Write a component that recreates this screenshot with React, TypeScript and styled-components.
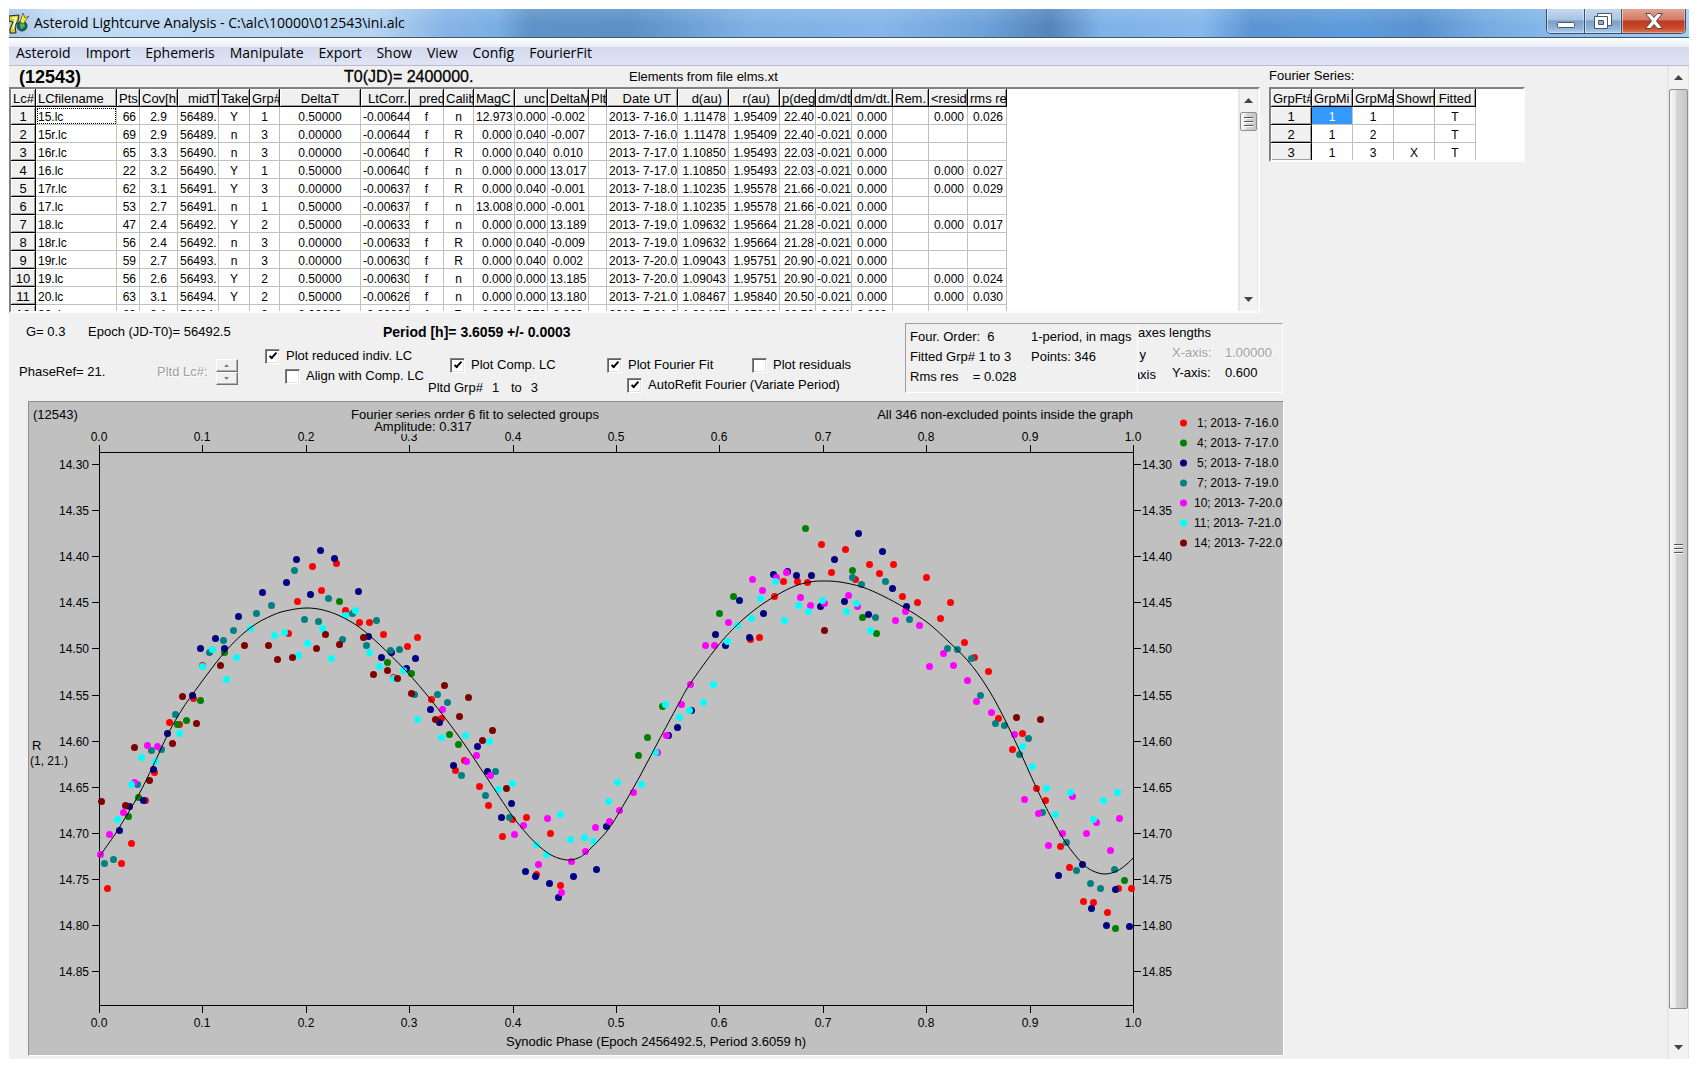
import React from "react";
import styled, { createGlobalStyle, css } from "styled-components";

const GlobalStyle = createGlobalStyle`
  *, *::before, *::after { box-sizing: border-box; }
  body { margin: 0; background: #ffffff; }
  button, input { font: inherit; color: inherit; margin: 0; }
`;

const sans = `"Liberation Sans", Arial, sans-serif`;
const chrome = `"Open Sans", "Noto Sans", sans-serif`;

/* ---------- window frame ---------- */

const Page = styled.div`
  min-height: 100vh;
  padding: 9px;
  display: flex;
  flex-direction: column;
`;

const Window = styled.div`
  flex: 1;
  display: flex;
  flex-direction: column;
  background: #f0f0f0;
  font-family: ${sans};
  font-size: 13px;
  line-height: 18px;
  color: #000;
`;

const TitleBar = styled.header`
  height: 29px;
  display: flex;
  align-items: center;
  justify-content: space-between;
  border-bottom: 1px solid #3c5878;
  background:
    linear-gradient(180deg, rgba(255, 255, 255, 0.12), rgba(255, 255, 255, 0) 60%),
    linear-gradient(90deg, #a9c8ea 0%, #c3dcf3 3%, #b4d3f0 22%, #86b4e6 26%, #7aafe4 29%, #5f92c8 31%, #5c90c7 37%,
      #7fb1e5 44%, #86b6e9 52%, #6ea2da 58%, #5384bb 62%, #7fb2e8 65%, #86b8ec 71%, #5b95d3 74%,
      #5f9cdc 80%, #5993d0 84%, #76ace2 88%, #8cbcea 93%, #a8cff2 100%);
`;

const TitleGroup = styled.div`
  display: flex;
  align-items: center;
  gap: 4px;
`;

const TitleText = styled.h1`
  margin: 0;
  font: 400 14px/26px ${chrome};
`;

const WindowButtons = styled.div`
  align-self: flex-start;
  display: flex;
  margin-right: 3px;
  height: 25px;
  border: 1px solid #3a4f6b;
  border-top: 0;
  border-radius: 0 0 5px 5px;
  overflow: hidden;
`;

const WindowButton = styled.button<{ $close?: boolean }>`
  width: ${(p) => (p.$close ? 64 : 37)}px;
  padding: 0;
  border: 0;
  display: flex;
  align-items: center;
  justify-content: center;
  background: ${(p) =>
    p.$close
      ? "linear-gradient(180deg, #e0a493 0%, #d27a66 45%, #bd3a22 50%, #c94a2c 80%, #dc7a55 100%)"
      : "linear-gradient(180deg, #c6d9ee 0%, #a9c4e2 45%, #7c9fc6 50%, #8fb2d8 80%, #b3d2ee 100%)"};
  box-shadow: inset 1px 0 rgba(255, 255, 255, 0.5), inset -1px -1px rgba(255, 255, 255, 0.3);
  & + & { border-left: 1px solid #3a4f6b; }
`;

const MenuBar = styled.nav`
  height: 28px;
  display: flex;
  align-items: center;
  padding: 2px 0 0 7px;
  gap: 15px;
  border-bottom: 1px solid #b6bbd3;
  background: linear-gradient(180deg, #ffffff 0%, #e9edf7 32%, #d4daee 34%, #dfe4f5 100%);
`;

const MenuItem = styled.button`
  border: 0;
  padding: 0;
  background: none;
  font: 400 14px/22px ${chrome};
`;

const Workspace = styled.div`
  flex: 1;
  display: flex;
`;

const Content = styled.main`
  flex: 1;
  min-width: 0;
`;

/* ---------- scroll bars ---------- */

const ScrollTrack = styled.div<{ $wide?: boolean }>`
  width: ${(p) => (p.$wide ? 22 : 20)}px;
  flex: none;
  display: flex;
  flex-direction: column;
  background: #f2f2f2;
  border: solid #e6e6e6;
  border-width: 0 1px 0 2px;
`;

const ArrowButton = styled.button<{ $bottom?: boolean }>`
  height: 23px;
  flex: none;
  padding: 0;
  border: 0;
  background: none;
  display: flex;
  align-items: center;
  justify-content: center;
  margin-top: ${(p) => (p.$bottom ? "auto" : "0")};
`;

const Thumb = styled.div<{ $fill?: boolean }>`
  ${(p) => (p.$fill ? css`flex: 1; margin-bottom: 27px;` : css`height: 19px;`)}
  border: 1px solid #8f8f8f;
  border-radius: 2px;
  background: linear-gradient(90deg, #f8f8f8 0%, #e8e8e8 32%, #d6d6d8 38%, #c6c6c8 100%);
  display: flex;
  flex-direction: column;
  align-items: center;
  justify-content: center;
  gap: 2px;
`;

const Grip = styled.span`
  width: 9px;
  height: 2px;
  background: linear-gradient(180deg, #555 50%, #fff 50%);
`;

function VScroll({ label, fill }: { label: string; fill?: boolean }) {
  return (
    <ScrollTrack $wide={fill}>
      <ArrowButton type="button" aria-label={`Scroll ${label} up`}>
        <svg width="9" height="5"><path d="M0 5 L4.5 0 L9 5Z" fill="#444" /></svg>
      </ArrowButton>
      <Thumb $fill={fill}><Grip /><Grip /><Grip /></Thumb>
      <ArrowButton type="button" $bottom={!fill} aria-label={`Scroll ${label} down`}>
        <svg width="9" height="5"><path d="M0 0 L4.5 5 L9 0Z" fill="#444" /></svg>
      </ArrowButton>
    </ScrollTrack>
  );
}

/* ---------- grids at the top ---------- */

const TopRow = styled.div`
  display: flex;
  align-items: flex-start;
  gap: 9px;
`;

const LcSection = styled.section`
  width: 1251px;
`;

const Headings = styled.div`
  display: grid;
  grid-template-columns: 325px 285px 1fr;
  align-items: center;
  height: 21px;
  padding-left: 10px;
`;

const ObjectName = styled.strong`
  font-size: 18px;
  line-height: 20px;
`;

const BaseDate = styled.span`
  font-size: 16px;
  line-height: 20px;
  -webkit-text-stroke: 0.3px #000;
`;

const Caption = styled.div`
  height: 21px;
  line-height: 20px;
`;

const GridFrame = styled.div<{ $height: number; $width?: number }>`
  display: flex;
  justify-content: space-between;
  height: ${(p) => p.$height}px;
  width: ${(p) => (p.$width ? `${p.$width}px` : "100%")};
  overflow: hidden;
  background: #fff;
  border: 2px solid;
  border-color: #808080 #fcfcfc #fcfcfc #808080;
`;

const DataTable = styled.table`
  table-layout: fixed;
  width: 0;
  border-collapse: separate;
  border-spacing: 0;
  align-self: flex-start;
`;

type Align = "left" | "center" | "right";

const cell = css<{ $align?: Align; $pad?: number }>`
  height: 18px;
  padding: 3px ${(p) => (p.$align === "center" ? 1 : p.$pad ?? 2)}px 0;
  text-align: ${(p) => p.$align ?? "left"};
  font-weight: 400;
  line-height: 14px;
  white-space: pre;
  overflow: hidden;
`;

const HeadCell = styled.th<{ $align?: Align; $pad?: number }>`
  ${cell}
  background: #f0f0f0;
  border-right: 1px solid #000;
  border-bottom: 1px solid #000;
  box-shadow: inset 1px 1px #fff, inset -1px -1px #a0a0a0;
`;

const Cell = styled.td<{ $align?: Align; $pad?: number; $focus?: boolean; $selected?: boolean }>`
  ${cell}
  font-size: 12px;
  border-right: 1px solid #c0c0c0;
  border-bottom: 1px solid #c0c0c0;
  ${(p) => p.$focus && css`outline: 1px dotted #000; outline-offset: -2px;`}
  ${(p) => p.$selected && css`background: #3399ff; color: #fff;`}
`;

type Column = { title: string; width: number; head?: Align; headPad?: number; body?: Align; pad?: number };

const lcColumns: Column[] = [
  { title: "Lc#", width: 25, body: "center" },
  { title: "LCfilename", width: 81 },
  { title: "Pts", width: 23, body: "right", pad: 3 },
  { title: "Cov[h", width: 38, body: "center" },
  { title: "midT", width: 41, head: "right", headPad: 1 },
  { title: "Take", width: 31, body: "center" },
  { title: "Grp#", width: 30, body: "center" },
  { title: "DeltaT", width: 81, head: "center", body: "center" },
  { title: "LtCorr.", width: 49, head: "right" },
  { title: "pred", width: 34, headPad: 9, body: "center" },
  { title: "Calib", width: 30, body: "center" },
  { title: "MagC", width: 41, body: "right", pad: 2 },
  { title: "unc", width: 33, head: "right", body: "center" },
  { title: "DeltaM", width: 41, body: "center" },
  { title: "Plt", width: 18 },
  { title: "Date UT", width: 71, head: "right", headPad: 6 },
  { title: "d(au)", width: 51, head: "right", headPad: 6, body: "right" },
  { title: "r(au)", width: 51, head: "right", headPad: 9, body: "right" },
  { title: "p(deg", width: 36, body: "right", pad: 1 },
  { title: "dm/dt", width: 36, pad: 1 },
  { title: "dm/dt.", width: 41, body: "center" },
  { title: "Rem.", width: 36 },
  { title: "<resid", width: 39, body: "right", pad: 3 },
  { title: "rms re", width: 39, body: "right", pad: 3 },
];

const lcRows: string[][] = [
  "1|15.lc|66|2.9|56489.|Y|1|0.50000|-0.00644|f|n|12.973|0.000|-0.002||2013- 7-16.0|1.11478|1.95409|22.40|-0.021|0.000||0.000|0.026",
  "2|15r.lc|69|2.9|56489.|n|3|0.00000|-0.00644|f|R|0.000|0.040|-0.007||2013- 7-16.0|1.11478|1.95409|22.40|-0.021|0.000|||",
  "3|16r.lc|65|3.3|56490.|n|3|0.00000|-0.00640|f|R|0.000|0.040|0.010||2013- 7-17.0|1.10850|1.95493|22.03|-0.021|0.000|||",
  "4|16.lc|22|3.2|56490.|Y|1|0.50000|-0.00640|f|n|0.000|0.000|13.017||2013- 7-17.0|1.10850|1.95493|22.03|-0.021|0.000||0.000|0.027",
  "5|17r.lc|62|3.1|56491.|Y|3|0.00000|-0.00637|f|R|0.000|0.040|-0.001||2013- 7-18.0|1.10235|1.95578|21.66|-0.021|0.000||0.000|0.029",
  "6|17.lc|53|2.7|56491.|n|1|0.50000|-0.00637|f|n|13.008|0.000|-0.001||2013- 7-18.0|1.10235|1.95578|21.66|-0.021|0.000|||",
  "7|18.lc|47|2.4|56492.|Y|2|0.50000|-0.00633|f|n|0.000|0.000|13.189||2013- 7-19.0|1.09632|1.95664|21.28|-0.021|0.000||0.000|0.017",
  "8|18r.lc|56|2.4|56492.|n|3|0.00000|-0.00633|f|R|0.000|0.040|-0.009||2013- 7-19.0|1.09632|1.95664|21.28|-0.021|0.000|||",
  "9|19r.lc|59|2.7|56493.|n|3|0.00000|-0.00630|f|R|0.000|0.040|0.002||2013- 7-20.0|1.09043|1.95751|20.90|-0.021|0.000|||",
  "10|19.lc|56|2.6|56493.|Y|2|0.50000|-0.00630|f|n|0.000|0.000|13.185||2013- 7-20.0|1.09043|1.95751|20.90|-0.021|0.000||0.000|0.024",
  "11|20.lc|63|3.1|56494.|Y|2|0.50000|-0.00626|f|n|0.000|0.000|13.180||2013- 7-21.0|1.08467|1.95840|20.50|-0.021|0.000||0.000|0.030",
  "12|20r.lc|63|3.1|56494.|n|3|0.00000|-0.00626|f|R|0.000|0.070|0.000||2013- 7-21.0|1.08467|1.95840|20.50|-0.021|0.000|||",
].map((row) => row.split("|"));

const fourierColumns: Column[] = [
  { title: "GrpFt#", width: 41, body: "center" },
  { title: "GrpMi", width: 41, body: "center" },
  { title: "GrpMa", width: 41, body: "center" },
  { title: "Shown", width: 41, body: "center" },
  { title: "Fitted", width: 41, head: "center", body: "center" },
];

const fourierRows = [
  ["1", "1", "1", "", "T"],
  ["2", "1", "2", "", "T"],
  ["3", "1", "3", "X", "T"],
];

function SheetTable(props: {
  label: string;
  columns: Column[];
  rows: string[][];
  focusFirst?: boolean;
  selectFirst?: boolean;
}) {
  const { label, columns, rows, focusFirst, selectFirst } = props;
  return (
    <DataTable aria-label={label}>
      <colgroup>
        {columns.map((c) => <col key={c.title} style={{ width: c.width }} />)}
      </colgroup>
      <thead>
        <tr>
          {columns.map((c) => (
            <HeadCell key={c.title} scope="col" $align={c.head} $pad={c.headPad}>{c.title}</HeadCell>
          ))}
        </tr>
      </thead>
      <tbody>
        {rows.map((row, r) => (
          <tr key={row[0]}>
            <HeadCell scope="row" $align="center">{row[0]}</HeadCell>
            {row.slice(1).map((value, i) => (
              <Cell
                key={columns[i + 1].title}
                $align={columns[i + 1].body}
                $pad={columns[i + 1].pad}
                $focus={focusFirst && r === 0 && i === 0}
                $selected={selectFirst && r === 0 && i === 0}
              >
                {value}
              </Cell>
            ))}
          </tr>
        ))}
      </tbody>
    </DataTable>
  );
}

/* ---------- controls ---------- */

const Controls = styled.section`
  display: flex;
  height: 88px;
`;

const ControlColumn = styled.div`
  width: 896px;
`;

const PeriodRow = styled.div`
  display: grid;
  grid-template-columns: 62px 295px 1fr;
  padding: 10px 0 0 17px;
  height: 33px;
`;

const Period = styled.strong`
  font-size: 14px;
`;

const OptionRow = styled.div`
  display: flex;
`;

const PhaseGroup = styled.div`
  display: flex;
  align-items: center;
  width: 256px;
  height: 52px;
  padding-left: 10px;
`;

const PhaseText = styled.span`
  width: 138px;
`;

const Disabled = styled.span`
  color: #a0a0a0;
  text-shadow: 1px 1px #fff;
`;

const Spinner = styled.div`
  display: flex;
  flex-direction: column;
  margin-left: 8px;
`;

const SpinButton = styled.button`
  width: 22px;
  height: 13px;
  padding: 0;
  display: flex;
  align-items: center;
  justify-content: center;
  background: #f0f0f0;
  border: 1px solid;
  border-color: #fff #707070 #707070 #fff;
  box-shadow: inset -1px -1px #b0b0b0;
`;

const CheckGroup = styled.div<{ $width: number; $top?: number }>`
  width: ${(p) => p.$width}px;
  display: flex;
  flex-direction: column;
  padding-top: ${(p) => p.$top ?? 0}px;
`;

const CheckLine = styled.div`
  display: flex;
`;

const CheckLabel = styled.label<{ $indent?: number; $width?: number }>`
  display: flex;
  align-items: center;
  gap: 6px;
  height: 20px;
  white-space: nowrap;
  padding-left: ${(p) => p.$indent ?? 0}px;
  width: ${(p) => (p.$width ? `${p.$width}px` : "auto")};
`;

const CheckBox = styled.input`
  appearance: none;
  width: 15px;
  height: 15px;
  flex: none;
  display: grid;
  place-items: center;
  background: #fff;
  border: 1px solid;
  border-color: #808080 #fff #fff #808080;
  box-shadow: inset 1px 1px #606060, inset -1px -1px #e3e3e3;
  &:checked::after {
    content: "";
    width: 4px;
    height: 8px;
    margin-bottom: 2px;
    border: solid #000;
    border-width: 0 2px 2px 0;
    transform: rotate(42deg);
  }
`;

const PlottedGroups = styled.div`
  display: flex;
  height: 24px;
  padding-top: 4px;
  gap: 9px;
`;

const Num = styled.span`
  width: 10px;
`;

const InfoPanel = styled.aside`
  display: flex;
  width: 378px;
  height: 70px;
  margin-top: 10px;
  border: 1px solid;
  border-color: #a0a0a0 #fff #fff #a0a0a0;
`;

const FitInfo = styled.div`
  width: 232px;
  display: grid;
  grid-template-columns: 121px 1fr;
  grid-auto-rows: 20px;
  padding: 4px 0 0 4px;
  border-right: 1px solid #fff;
  white-space: pre;
`;

const AxesInfo = styled.div`
  flex: 1;
  overflow: hidden;
`;

const AxesRow = styled.div`
  display: grid;
  grid-template-columns: 34px 53px 1fr;
  grid-auto-rows: 20px;
  padding-top: 2px;
`;

const ClipEnd = styled.span<{ $width: number }>`
  display: flex;
  justify-content: flex-end;
  align-items: flex-end;
  overflow: hidden;
  width: ${(p) => p.$width}px;
`;

function Check(props: { text: string; on?: boolean; indent?: number; width?: number }) {
  return (
    <CheckLabel $indent={props.indent} $width={props.width}>
      <CheckBox type="checkbox" defaultChecked={props.on} />
      {props.text}
    </CheckLabel>
  );
}

/* ---------- light curve ---------- */

const PlotPanel = styled.figure`
  width: 1256px;
  height: 655px;
  margin: 0 0 0 19px;
  background: #c0c0c0;
  border: 1px solid;
  border-color: #909090 #fff #fff #909090;
`;

const Plot = styled.svg`
  display: block;
  font-family: ${sans};
  font-size: 12px;
`;

const PlotTitle = styled.text`
  font-size: 13px;
`;

const plotBox = { left: 99, right: 1133, top: 452, bottom: 1005 };
const xAt = (phase: number) => Math.round(plotBox.left + phase * 1034);
const yAt = (mag: number) => Math.round(464 + ((mag - 14.3) / 0.05) * 46.1);

const phases = Array.from({ length: 11 }, (_, i) => i / 10);
const mags = Array.from({ length: 12 }, (_, i) => 14.3 + i * 0.05);

type Series = { name: string; color: string; points: string };

const series: Series[] = [
  {
    name: "1; 2013- 7-16.0",
    color: "#ff0000",
    points:
      "107,888 121,863 131,843 145,800 154,772 169,722 179,724 193,698 202,665 288,633 297,601 312,566 321,590 336,563 345,610 359,622 369,622 383,634 407,646 417,637 393,677 431,699 441,718 464,760 455,770 479,786 488,805 502,836 512,819 526,817 550,833 536,874 560,885 750,639 759,637 774,596 783,581 797,581 807,582 821,544 831,572 845,549 855,579 869,564 879,573 893,564 902,596 917,602 926,577 940,618 950,602 964,642 974,657 988,671 998,718 1022,733 1012,749 1036,788 1045,800 1060,846 1069,867 1083,901 1093,902 1107,912 1118,888 1131,888",
  },
  {
    name: "4; 2013- 7-17.0",
    color: "#008000",
    points:
      "128,816 138,797 177,724 186,720 200,700 224,652 339,601 387,662 411,673 449,734 458,744 638,755 647,737 662,706 719,613 733,596 805,528 852,570 862,617 876,633 1124,880 1115,928",
  },
  {
    name: "5; 2013- 7-18.0",
    color: "#000080",
    points:
      "119,830 129,806 143,800 153,769 167,733 192,695 200,648 215,638 224,648 238,616 262,592 286,582 296,559 310,594 320,550 334,558 358,591 368,636 381,657 391,652 406,668 415,658 430,709 439,722 453,765 477,746 487,771 501,817 511,803 525,871 535,876 549,883 558,897 573,876 596,869 606,826 668,735 677,727 691,710 715,634 725,645 739,600 749,637 763,613 773,574 787,571 796,575 811,575 820,606 834,559 844,601 858,533 868,614 882,551 892,588 906,606 1058,875 1082,864 1091,908 1106,925 1115,889 1129,926",
  },
  {
    name: "7; 2013- 7-19.0",
    color: "#008080",
    points:
      "104,863 113,859 137,784 151,750 161,749 175,714 209,652 223,640 233,630 256,613 271,605 294,570 304,619 318,621 328,598 342,639 352,613 366,645 376,620 390,650 399,649 414,694 437,694 447,702 461,775 485,795 495,771 509,817 852,577 861,584 875,617 885,581 909,619 947,648 957,649 971,658 980,695 995,723 1004,725 1028,738 1019,754 1042,812 1066,842 1076,870 1090,883 1100,888 1114,869",
  },
  {
    name: "10; 2013- 7-20.0",
    color: "#ff00ff",
    points:
      "100,854 109,834 123,812 134,782 147,745 157,746 442,709 466,761 476,755 490,775 514,834 523,825 538,864 547,818 561,892 571,861 585,851 595,827 609,821 619,810 633,792 657,752 666,735 681,704 690,684 705,645 714,645 728,622 752,579 762,590 776,577 786,572 800,597 810,605 824,603 848,595 857,606 895,620 905,611 919,625 929,666 943,653 953,665 967,680 976,701 991,712 1014,734 1024,799 1038,813 1048,845 1062,833 1072,796 1086,833 1096,822 1110,850 1119,818",
  },
  {
    name: "11; 2013- 7-21.0",
    color: "#00ffff",
    points:
      "117,819 131,784 141,757 155,761 179,733 202,666 212,649 226,679 236,657 250,628 274,635 284,632 298,655 307,643 322,628 331,658 345,615 355,610 369,652 379,666 393,678 403,670 417,719 441,737 465,735 489,741 498,789 512,783 536,844 546,854 560,814 570,839 584,837 593,841 608,801 617,782 641,784 655,752 665,704 679,717 689,710 703,702 713,684 727,641 737,625 751,618 760,598 775,581 784,620 798,605 808,611 822,600 846,611 856,603 870,630 1022,746 1032,766 1046,788 1055,814 1070,792 1093,819 1103,800 1117,792",
  },
  {
    name: "14; 2013- 7-22.0",
    color: "#800000",
    points:
      "101,801 125,805 134,747 149,780 172,743 182,696 196,723 220,665 244,645 268,645 277,659 292,657 316,648 325,634 339,644 363,637 373,674 387,670 397,678 411,693 444,685 435,719 468,697 459,716 492,730 482,740 506,788 824,630 1016,717 1040,719",
  },
];

const parse = (s: string) => s.split(" ").map((p) => p.split(",").map(Number));

const fitKnots = parse(
  "99,857 109,843 119,828 138,796 153,766 167,736 178,716 192,695 224,653 250,628 273,615 290,610 307,608 323,610 340,616 359,627 380,645 407,672 431,700 460,738 487,778 511,814 527,834 540,847 553,856 567,860 578,858 588,851 607,831 620,811 640,776 658,742 678,705 690,684 717,647 737,625 757,608 777,595 795,586 810,582 823,581 840,582 862,587 883,596 905,608 928,623 948,641 968,661 985,684 1000,710 1017,745 1036,787 1050,815 1066,843 1082,863 1093,871 1105,874 1117,871 1127,864 1133,858",
);

// Catmull-Rom spline through the knots, written as cubic segments.
const fitPath = fitKnots.reduce((d, p, i, all) => {
  if (i === 0) return `M${p[0]} ${p[1]}`;
  const p0 = all[i - 2] ?? all[i - 1];
  const p1 = all[i - 1];
  const p3 = all[i + 1] ?? p;
  const c1 = [p1[0] + (p[0] - p0[0]) / 6, p1[1] + (p[1] - p0[1]) / 6];
  const c2 = [p[0] - (p3[0] - p1[0]) / 6, p[1] - (p3[1] - p1[1]) / 6];
  return `${d} C${c1[0]} ${c1[1]} ${c2[0]} ${c2[1]} ${p[0]} ${p[1]}`;
}, "");

function LightCurve() {
  const { left, right, top, bottom } = plotBox;
  return (
    <PlotPanel>
      <Plot width="1254" height="653" viewBox="29 402 1254 653" role="img" aria-label="Composite light curve of (12543)">
        <PlotTitle x="33" y="419">(12543)</PlotTitle>
        <PlotTitle x="475" y="419" textAnchor="middle">Fourier series order 6 fit to selected groups</PlotTitle>
        <PlotTitle x="1133" y="419" textAnchor="end">All 346 non-excluded points inside the graph</PlotTitle>

        <g stroke="#000" fill="none" shapeRendering="crispEdges">
          <rect x={left + 0.5} y={top + 0.5} width={right - left} height={bottom - top} />
          {phases.map((p) => (
            <path key={p} d={`M${xAt(p) + 0.5} ${top - 7}v7M${xAt(p) + 0.5} ${bottom}v8`} />
          ))}
          {mags.map((m) => (
            <path key={m} d={`M${left - 7} ${yAt(m) + 0.5}h7M${right} ${yAt(m) + 0.5}h8`} />
          ))}
        </g>
        {phases.map((p) => (
          <g key={p} textAnchor="middle">
            <text x={xAt(p)} y="441">{p.toFixed(1)}</text>
            <text x={xAt(p)} y="1027">{p.toFixed(1)}</text>
          </g>
        ))}
        {mags.map((m) => (
          <g key={m}>
            <text x="89" y={yAt(m) + 5} textAnchor="end">{m.toFixed(2)}</text>
            <text x="1142" y={yAt(m) + 5}>{m.toFixed(2)}</text>
          </g>
        ))}
        <rect x="392" y="418" width="76" height="16" fill="#c0c0c0" />
        <PlotTitle x="423" y="431" textAnchor="middle">Amplitude: 0.317</PlotTitle>

        {series.map((s) => (
          <g key={s.name} fill={s.color}>
            {parse(s.points).map(([x, y]) => (
              <circle key={`${x},${y}`} cx={x + 0.5} cy={y + 0.5} r="3.5" />
            ))}
          </g>
        ))}
        <path d={fitPath} fill="none" stroke="#000" />

        {series.map((s, i) => (
          <g key={s.name}>
            <circle cx="1183.5" cy={423 + i * 20} r="3.5" fill={s.color} />
            <text x={i < 4 ? 1197 : 1194} y={427 + i * 20}>{s.name}</text>
          </g>
        ))}

        <PlotTitle x="32" y="750">R</PlotTitle>
        <text x="30" y="765">(1, 21.)</text>
        <PlotTitle x="656" y="1046" textAnchor="middle">Synodic Phase (Epoch 2456492.5, Period 3.6059 h)</PlotTitle>
      </Plot>
    </PlotPanel>
  );
}

/* ---------- icons ---------- */

const AppIcon = () => (
  <svg width="21" height="22" viewBox="0 0 21 22" aria-hidden="true">
    <path d="M0 4 L10 3 L9 9 L6 14 L7 21 L1 21 L1 17 L4 10 L0 9Z" fill="#d8d020" stroke="#222" />
    <path d="M3 6 L7 6 L4 17" fill="none" stroke="#fff" strokeWidth="1.500" />
    <circle cx="13" cy="14" r="5" fill="#1f6f4a" stroke="#1d3550" />
    <path d="M11 12 L14 11 L16 14 L12 17Z" fill="#49b868" />
    <path d="M11 10 L14 1 L16 6 L20 4 L14 12Z" fill="#f6ee20" stroke="#444" strokeWidth="0.7" />
  </svg>
);

const menus = ["Asteroid", "Import", "Ephemeris", "Manipulate", "Export", "Show", "View", "Config", "FourierFit"];

export default function App() {
  return (
    <>
      <GlobalStyle />
      <Page>
        <Window>
          <TitleBar>
            <TitleGroup>
              <AppIcon />
              <TitleText>Asteroid Lightcurve Analysis - C:\alc\10000\012543\ini.alc</TitleText>
            </TitleGroup>
            <WindowButtons>
              <WindowButton type="button" aria-label="Minimize">
                <svg width="20" height="20"><rect x="1.5" y="11.5" width="17" height="5" rx="1" fill="#fff" stroke="#4a5568" /></svg>
              </WindowButton>
              <WindowButton type="button" aria-label="Restore">
                <svg width="20" height="18">
                  <path d="M4.500 1.500h14v12h-14z" fill="#fff" stroke="#4a5568" />
                  <path d="M1.500 4.500h13v12h-13z" fill="#fff" stroke="#4a5568" />
                  <path d="M5.500 8.500h5v4h-5z" fill="#8fb0d4" stroke="#4a5568" />
                </svg>
              </WindowButton>
              <WindowButton type="button" $close aria-label="Close">
                <svg width="20" height="18">
                  <path d="M1.500 1.500h5l3.500 4 3.500-4h5l-6 7.500 6 7.500h-5l-3.500-4-3.500 4h-5l6-7.500z" fill="#fff" stroke="#5a4448" />
                </svg>
              </WindowButton>
            </WindowButtons>
          </TitleBar>

          <MenuBar>
            {menus.map((m) => <MenuItem key={m} type="button">{m}</MenuItem>)}
          </MenuBar>

          <Workspace>
            <Content>
              <TopRow>
                <LcSection>
                  <Headings>
                    <ObjectName>(12543)</ObjectName>
                    <BaseDate>T0(JD)= 2400000.</BaseDate>
                    <span>Elements from file elms.xt</span>
                  </Headings>
                  <GridFrame $height={226}>
                    <SheetTable label="Light curves" columns={lcColumns} rows={lcRows} focusFirst />
                    <VScroll label="light curves" />
                  </GridFrame>
                </LcSection>
                <section>
                  <Caption>Fourier Series:</Caption>
                  <GridFrame $height={75} $width={256}>
                    <SheetTable label="Fourier series" columns={fourierColumns} rows={fourierRows} selectFirst />
                  </GridFrame>
                </section>
              </TopRow>

              <Controls>
                <ControlColumn>
                  <PeriodRow>
                    <span>G= 0.3</span>
                    <span>Epoch (JD-T0)= 56492.5</span>
                    <Period>Period [h]= 3.6059 +/- 0.0003</Period>
                  </PeriodRow>
                  <OptionRow>
                    <PhaseGroup>
                      <PhaseText>PhaseRef= 21.</PhaseText>
                      <Disabled>Pltd Lc#:</Disabled>
                      <Spinner>
                        <SpinButton type="button" disabled aria-label="Next light curve">
                          <svg width="5" height="3"><path d="M0 3 L2.500 0 L5 3Z" fill="#808080" /></svg>
                        </SpinButton>
                        <SpinButton type="button" disabled aria-label="Previous light curve">
                          <svg width="5" height="3"><path d="M0 0 L2.500 3 L5 0Z" fill="#808080" /></svg>
                        </SpinButton>
                      </Spinner>
                    </PhaseGroup>
                    <CheckGroup $width={163}>
                      <Check text="Plot reduced indiv. LC" on />
                      <Check text="Align with Comp. LC" indent={20} />
                    </CheckGroup>
                    <CheckGroup $width={179} $top={9}>
                      <Check text="Plot Comp. LC" on indent={22} />
                      <PlottedGroups>
                        <span>Pltd Grp#</span>
                        <Num>1</Num>
                        <span>to</span>
                        <Num>3</Num>
                      </PlottedGroups>
                    </CheckGroup>
                    <CheckGroup $width={280} $top={9}>
                      <CheckLine>
                        <Check text="Plot Fourier Fit" on width={145} />
                        <Check text="Plot residuals" />
                      </CheckLine>
                      <Check text="AutoRefit Fourier (Variate Period)" on indent={20} />
                    </CheckGroup>
                  </OptionRow>
                </ControlColumn>

                <InfoPanel>
                  <FitInfo>
                    <span>Four. Order:  6</span>
                    <span>1-period, in mags</span>
                    <span>Fitted Grp# 1 to 3</span>
                    <span>Points: 346</span>
                    <span>{"Rms res    = 0.028"}</span>
                  </FitInfo>
                  <AxesInfo>
                    <span>axes lengths</span>
                    <AxesRow>
                      <ClipEnd $width={8}>y</ClipEnd>
                      <Disabled>X-axis:</Disabled>
                      <Disabled>1.00000</Disabled>
                      <ClipEnd $width={18}>axis</ClipEnd>
                      <span>Y-axis:</span>
                      <span>0.600</span>
                    </AxesRow>
                  </AxesInfo>
                </InfoPanel>
              </Controls>

              <LightCurve />
            </Content>
            <VScroll label="window" fill />
          </Workspace>
        </Window>
      </Page>
    </>
  );
}
